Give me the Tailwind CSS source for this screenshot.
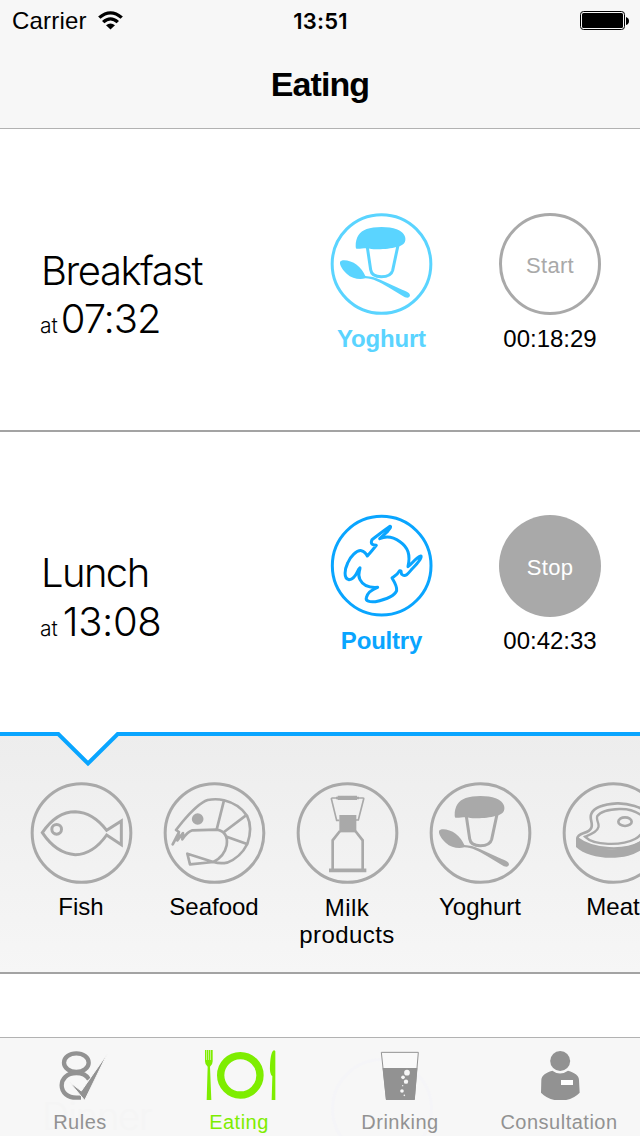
<!DOCTYPE html>
<html lang="en">
<head>
    <meta charset="UTF-8">
    <meta name="viewport" content="width=device-width, initial-scale=1.0">
    <title>Eating</title>
    <script src="https://cdn.jsdelivr.net/npm/@tailwindcss/browser@4"></script>
</head>
<body class="bg-white text-black font-['Liberation_Sans',Arial,sans-serif]">
    <!-- Shared yoghurt icon -->
    <svg class="hidden">
        <symbol id="yoghurt" viewBox="27 36 312 312">
            <circle cx="184.5" cy="192" r="148" fill="none" stroke="currentColor" stroke-width="9"/>
            <path d="M107 139C107 112 118 95 140 87C162 79 207 78 230 88C250 96 258 109 256 121C254 133 243 139 229 141C208 148 167 149 150 146C135 143 118 148 109 146Q107 144 107 139Z" fill="currentColor"/>
            <path d="M142 142L152 209Q155 230 184 230Q213 230 218 211L234 136" fill="none" stroke="currentColor" stroke-width="9"/>
            <path d="M60 186C64 176 93 181 110 194C122 203 131 216 136 228C153 229 165 232 181 239L240 266C258 274 270 277 270 286C269 296 257 294 247 287L205 262C180 248 158 235 136 235C119 240 96 236 80 221C68 210 58 195 60 186Z" fill="currentColor"/>
        </symbol>
    </svg>

    <div class="relative flex flex-col w-[640px] h-[1136px] overflow-hidden">
        <!-- Header -->
        <header class="h-[129px] shrink-0 bg-[#f7f7f7] border-b border-[#b2b2b2]">
            <div class="grid grid-cols-3 items-center h-10 pl-3 pr-[11px]">
                <div class="flex items-center gap-[11px] text-[24px] tracking-[0.2px] leading-[42px]">
                    <span>Carrier</span>
                    <svg class="w-[25px] h-[20px] -mt-0.5" viewBox="0 0 25 22" preserveAspectRatio="none" fill="none" stroke="#000" stroke-width="3.4">
                        <path d="M1.3 8.3Q12.5 -2.2 23.7 8.3"/>
                        <path d="M5.2 13.3Q12.5 6.2 19.8 13.3"/>
                        <path d="M12.5 21.5L8 16.8Q12.5 12.8 17 16.8Z" fill="#000" stroke="none"/>
                    </svg>
                </div>
                <div class="text-center font-['Inter',sans-serif] font-semibold text-[22px] leading-[42px] tracking-[0.2px]">13:51</div>
                <svg class="justify-self-end w-[50px] h-6" viewBox="0 0 50 24">
                    <rect x="1.5" y="2.5" width="44" height="18" rx="3" fill="none" stroke="#000"/>
                    <rect x="3" y="4" width="41" height="15" rx="1.5"/>
                    <path d="M47 8Q50 9 50 12Q50 15 47 16Z"/>
                </svg>
            </div>
            <h1 class="text-center font-bold text-[34px] leading-[88px] tracking-[-0.9px]">Eating</h1>
        </header>

        <!-- Breakfast -->
        <section class="flex h-[303px] shrink-0 border-b-2 border-[#a3a3a3]">
            <div class="w-[315px] pl-10 pt-[118px] font-['Inter',sans-serif] font-light">
                <h2 class="text-[40px] leading-[48px] tracking-[-1.45px] pl-px">Breakfast</h2>
                <p class="text-[40px] leading-[48px] tracking-[-1.1px]"><span class="text-[21px] tracking-normal mr-[3px]">at</span>07:32</p>
            </div>
            <div class="w-[133px] flex flex-col items-center pt-[83px] text-[#5ad4ff]">
                <svg class="size-[104px] mr-[1.5px]"><use href="#yoghurt"/></svg>
                <p class="font-bold text-[24px] leading-[46px] tracking-[-0.2px]">Yoghurt</p>
            </div>
            <div class="w-[192px] pl-3 flex flex-col items-center pt-[84px]">
                <div class="size-[102px] rounded-full border-3 border-[#a9a9a9] text-[#a9a9a9] text-[22px] tracking-[0.3px] text-center leading-[99px]">Start</div>
                <p class="text-[24px] leading-[48px]">00:18:29</p>
            </div>
        </section>

        <!-- Lunch -->
        <section class="flex h-[300px] shrink-0">
            <div class="w-[315px] pl-10 pt-[117px] font-['Inter',sans-serif] font-light">
                <h2 class="text-[40px] leading-[48px] tracking-[-1.6px] pl-px">Lunch</h2>
                <p class="text-[40px] leading-[49px] tracking-[-0.4px]"><span class="text-[21px] tracking-normal mr-[5px]">at</span>13:08</p>
            </div>
            <div class="w-[133px] flex flex-col items-center pt-[82px] text-[#09a5ff]">
                <svg class="size-[104px] mr-[1.5px]" viewBox="27 27 312 312" fill="none" stroke="currentColor" stroke-width="9" stroke-linecap="round" stroke-linejoin="round">
                    <circle cx="185" cy="182" r="148"/>
                    <path d="M179 101C196 93 219 95 240 110C264 127 272 148 264 185C279 173 287 158 303 153C307 158 290 178 276 192C264 206 258 215 248 210C239 206 248 196 239 197C233 209 222 214 216 219C224 232 232 244 230 257C223 275 191 285 166 290C149 292 136 288 139 278C142 263 157 253 173 247C147 249 128 240 120 224C111 207 120 199 120 188C110 195 110 222 87 224C69 221 75 191 83 174C91 155 110 135 124 137C135 139 139 147 142 153C151 143 158 134 169 121C158 120 150 118 156 104C171 93 190 78 210 64C215 65 208 72 203 79Z"/>
                </svg>
                <p class="font-bold text-[24px] leading-[46px] tracking-[-0.2px]">Poultry</p>
            </div>
            <div class="w-[192px] pl-3 flex flex-col items-center pt-[83px]">
                <div class="size-[102px] rounded-full bg-[#a9a9a9] text-white text-[22px] tracking-[0.3px] text-center leading-[105px]">Stop</div>
                <p class="text-[24px] leading-[48px]">00:42:33</p>
            </div>
        </section>

        <!-- Food picker -->
        <section class="h-[242px] shrink-0 bg-linear-to-b from-[#ededed] to-[#f6f6f6] border-b-2 border-[#a3a3a3]">
            <svg class="block w-full h-10" viewBox="0 0 640 40">
                <path d="M0 0V2H58.3L88 31.5L117.7 2H640V0Z" fill="#fff"/>
                <path d="M0 2H58.3L88 31.5L117.7 2H640" fill="none" stroke="#09a5ff" stroke-width="4"/>
            </svg>
            <div class="flex pl-[14.5px] pt-[9px] text-[24px] leading-[27px] text-center">
                <div class="w-[133px] shrink-0 flex flex-col items-center">
                    <svg class="size-[104px] text-[#a9a9a9]" viewBox="27 168 312 312" fill="none" stroke="currentColor" stroke-width="9">
                        <circle cx="184.5" cy="324" r="148"/>
                        <path d="M67 323Q109 260 166 260Q219 262 260 316L304 288V359L260 330Q219 388 166 389Q109 386 67 323Z"/>
                        <circle cx="110" cy="313" r="14.5"/>
                    </svg>
                    <p class="pt-2">Fish</p>
                </div>
                <div class="w-[133px] shrink-0 flex flex-col items-center">
                    <svg class="size-[104px] text-[#a9a9a9]" viewBox="21 18 312 312" fill="none" stroke="currentColor" stroke-width="8" stroke-linejoin="round">
                        <circle cx="178.5" cy="174" r="148" stroke-width="9"/>
                        <path d="M53 208L72 171L63 165L82 141Q129 85 158 75Q184 70 207 76Q252 87 276 122Q294 158 277 207Q256 248 216 263Q195 267 175 261L97 236L105 268L175 261Q208 245 215 211Q221 170 185 164L112 166Q98 170 82 193L84 174L67 196L71 176Z"/>
                        <path d="M207 76L185 164M272 122L207 171M276 207L215 185"/>
                        <circle cx="128" cy="132" r="17.5" fill="currentColor" stroke="none"/>
                    </svg>
                    <p class="pt-2">Seafood</p>
                </div>
                <div class="w-[133px] shrink-0 flex flex-col items-center">
                    <svg class="size-[104px] text-[#a9a9a9]" viewBox="30 18 312 312" fill="none" stroke="currentColor" stroke-width="5">
                        <circle cx="187.5" cy="174" r="148" stroke-width="9"/>
                        <path d="M163 136H155L139 71Q139 69 142 69H234Q237 69 236 72L220 135H213"/>
                        <path d="M158 62H216V75H158ZM153 65H222V73H153Z" fill="currentColor" stroke="none"/>
                        <path d="M163 120H214V172H163Z" fill="currentColor" stroke="none"/>
                        <path d="M165 168L143 196V286H233V196L211 168" stroke-width="8"/>
                        <path d="M132 286H244" stroke-width="11"/>
                    </svg>
                    <p class="pt-[9px] tracking-[0.4px]">Milk<br>products</p>
                </div>
                <div class="w-[133px] shrink-0 flex flex-col items-center">
                    <svg class="size-[104px] text-[#a9a9a9]"><use href="#yoghurt"/></svg>
                    <p class="pt-2">Yoghurt</p>
                </div>
                <div class="w-[133px] shrink-0 flex flex-col items-center">
                    <svg class="size-[104px] text-[#a9a9a9]" viewBox="423 18 312 312" fill="none" stroke="currentColor" stroke-width="8">
                        <circle cx="580.5" cy="174" r="148" stroke-width="9"/>
                        <path d="M472 190C474 172 507 177 514 158C520 143 507 132 514 116C523 96 557 87 591 85C625 84 665 96 690 118C706 145 690 180 660 203C615 229 520 227 472 190Z"/>
                        <path d="M495 185C508 180 532 172 535 157C539 143 527 137 532 123C543 107 570 103 598 102C630 101 655 111 672 128C684 150 668 180 645 192C605 213 520 212 495 185Z" stroke-width="7"/>
                        <path d="M468 187C510 224 590 236 645 207Q675 193 690 170V201Q667 230 625 242C570 256 500 247 468 216Z" fill="currentColor" stroke="none"/>
                        <ellipse cx="615" cy="140" rx="20" ry="13"/>
                    </svg>
                    <p class="pt-2">Meat</p>
                </div>
            </div>
        </section>

        <!-- Tab bar -->
        <nav class="relative mt-auto h-[99px] shrink-0 grid grid-cols-4 overflow-hidden bg-[#f7f7f7] border-t border-[#b2b2b2] text-[#929292] text-[20px] leading-6 text-center tracking-[0.5px]">
            <!-- Dinner row showing through the bar -->
            <span class="absolute left-[42px] top-[54px] font-['Inter',sans-serif] font-light text-[38px] leading-[48px] tracking-[-1.2px] text-[#f5f5f5]">Dinner</span>
            <span class="absolute left-[331px] top-[20px] size-[102px] rounded-full border-3 border-[#f5f5f8]"></span>
            <a class="relative">
                <svg class="block w-[160px] h-[62px]" viewBox="0 24 480 186" fill="none" stroke="currentColor">
                    <ellipse cx="229" cy="98" rx="37" ry="28" stroke-width="13"/>
                    <path d="M243 203H229C203 203 185 188 185 166C185 147 200 129 229 129C246 129 260 136 267 148" stroke-width="13"/>
                    <path d="M208 156L244 183L322 71L254 211Z" fill="currentColor" stroke="#f7f7f7" stroke-width="3"/>
                </svg>
                <span class="block pt-2.5">Rules</span>
            </a>
            <a class="relative text-[#7eed00]">
                <svg class="block w-[160px] h-[62px]" viewBox="480 24 480 186" fill="currentColor">
                    <path d="M615 60H618V90H621V60H624V90H627V60H630V90H633V60H638V94Q638 105 630 110L634 210H620L623 110Q615 105 615 94Z"/>
                    <path d="M618 60H636V92H618Z" opacity=".45"/>
                    <circle cx="721" cy="136" r="59" fill="none" stroke="currentColor" stroke-width="22"/>
                    <path d="M826 64V210H815L817 139Q808 132 810 106Q812 62 823 61Z"/>
                </svg>
                <span class="block pt-2.5 pr-0.5">Eating</span>
            </a>
            <a class="relative">
                <svg class="block w-[160px] h-[62px]" viewBox="0 24 480 186" fill="currentColor">
                    <path d="M184 67H295L283 208H199Z" fill="#f9f9f9" stroke="currentColor" stroke-width="3"/>
                    <path d="M188 114H292L284 210H198Z"/>
                    <g fill="#f7f7f7">
                        <circle cx="261" cy="128" r="8.5"/>
                        <circle cx="249" cy="142" r="5.5"/>
                        <circle cx="258" cy="155" r="6.5"/>
                        <circle cx="248" cy="167" r="2"/>
                        <circle cx="246" cy="183" r="5.5"/>
                        <circle cx="253" cy="196" r="2.5"/>
                    </g>
                </svg>
                <span class="block pt-2.5">Drinking</span>
            </a>
            <a class="relative">
                <svg class="block w-[160px] h-[62px]" viewBox="480 24 480 186" fill="currentColor">
                    <circle cx="720.5" cy="93" r="30"/>
                    <path d="M697 122Q720 139 744 122C765 128 777 137 777 150L779 188Q757 211 721 212Q685 211 663 188L664 150C665 137 676 128 697 122Z"/>
                    <path d="M723 150H759V165H723Z" fill="#fff"/>
                </svg>
                <span class="block pt-2.5 pr-0.5">Consultation</span>
            </a>
        </nav>
    </div>
</body>
</html>
